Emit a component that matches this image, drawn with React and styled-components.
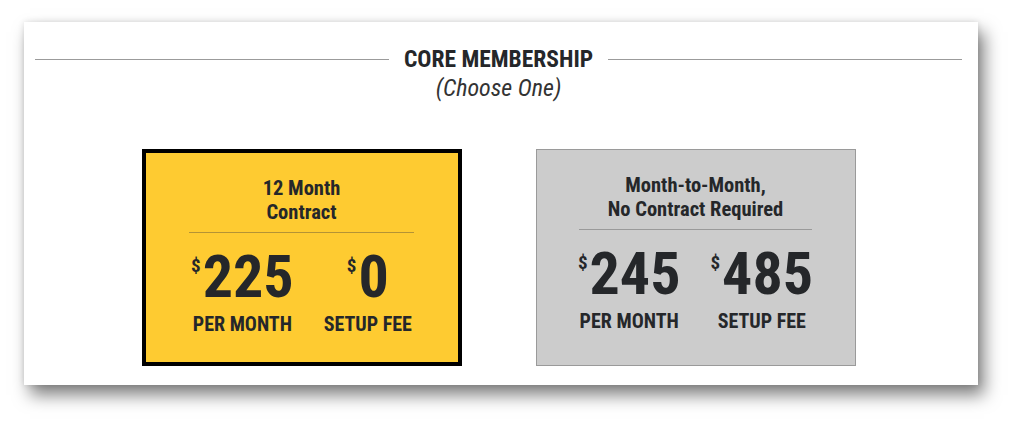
import React from "react";
import styled, { createGlobalStyle } from "styled-components";

const GlobalStyle = createGlobalStyle`
  body {
    margin: 0;
    background: #ffffff;
    font-family: "Roboto Condensed", Roboto, "Liberation Sans Narrow", sans-serif;
    font-stretch: condensed;
    color: #25272a;
  }
`;

const Page = styled.div`
  width: 1024px;
  height: 432px;
  padding: 22px 0 0 24px;
  box-sizing: border-box;
`;

const Panel = styled.section`
  width: 954px;
  height: 363px;
  background: #ffffff;
  box-shadow: 0 0 6px rgba(0, 0, 0, 0.12), 6px 10px 16px rgba(0, 0, 0, 0.5);
  padding: 24px 16px 0 11px;
  box-sizing: border-box;
`;

const Header = styled.div`
  display: flex;
  align-items: center;
  gap: 15px;
`;

const Rule = styled.div`
  flex: 1;
  height: 1px;
  background: #9b9b9b;
`;

const Title = styled.h2`
  margin: 0;
  font-size: 23.5px;
  line-height: 26px;
  font-weight: 700;
`;

const Subtitle = styled.div`
  text-align: center;
  font-size: 24px;
  line-height: 28px;
  font-style: italic;
  font-weight: 400;
  color: #333;
  margin-top: 2px;
`;

const Cards = styled.div`
  display: flex;
  justify-content: center;
  gap: 74px;
  margin-top: 47px;
`;

const Card = styled.div`
  width: 320px;
  height: 217px;
  box-sizing: border-box;
  background: ${(p) => (p.$featured ? "#fecb31" : "#cccccc")};
  border: ${(p) => (p.$featured ? "4px solid #000" : "1px solid #9a9a9a")};
  padding: 23px 0 0;
  display: flex;
  flex-direction: column;
  align-items: center;
`;

const CardTitle = styled.div`
  font-size: 20.5px;
  line-height: 24px;
  font-weight: 700;
  text-align: center;
`;

const Divider = styled.div`
  width: ${(p) => p.$w}px;
  height: 1px;
  margin-top: 8px;
  background: ${(p) => (p.$featured ? "rgba(90, 80, 60, 0.45)" : "#9a9a9a")};
`;

const Prices = styled.div`
  display: flex;
  gap: 30px;
  margin-top: 14px;
`;

const Col = styled.div`
  display: flex;
  flex-direction: column;
  align-items: center;
`;

const Amount = styled.div`
  display: flex;
  align-items: flex-start;
  font-size: 60px;
  line-height: 60px;
  font-weight: 700;
`;

const Dollar = styled.span`
  font-size: 19px;
  line-height: 19px;
  margin-top: 9px;
  margin-right: 2px;
`;

const Label = styled.div`
  font-size: 20px;
  line-height: 22px;
  font-weight: 700;
  margin-top: 6px;
`;

function Price({ amount, label }) {
  return (
    <Col>
      <Amount>
        <Dollar>$</Dollar>
        {amount}
      </Amount>
      <Label>{label}</Label>
    </Col>
  );
}

export default function App() {
  return (
    <Page>
      <GlobalStyle />
      <Panel>
        <Header>
          <Rule />
          <Title>CORE MEMBERSHIP</Title>
          <Rule />
        </Header>
        <Subtitle>(Choose One)</Subtitle>
        <Cards>
          <Card $featured>
            <CardTitle>
              12 Month
              <br />
              Contract
            </CardTitle>
            <Divider $featured $w={225} />
            <Prices>
              <Price amount="225" label="PER MONTH" />
              <Price amount="0" label="SETUP FEE" />
            </Prices>
          </Card>
          <Card>
            <CardTitle>
              Month-to-Month,
              <br />
              No Contract Required
            </CardTitle>
            <Divider $w={233} />
            <Prices>
              <Price amount="245" label="PER MONTH" />
              <Price amount="485" label="SETUP FEE" />
            </Prices>
          </Card>
        </Cards>
      </Panel>
    </Page>
  );
}
